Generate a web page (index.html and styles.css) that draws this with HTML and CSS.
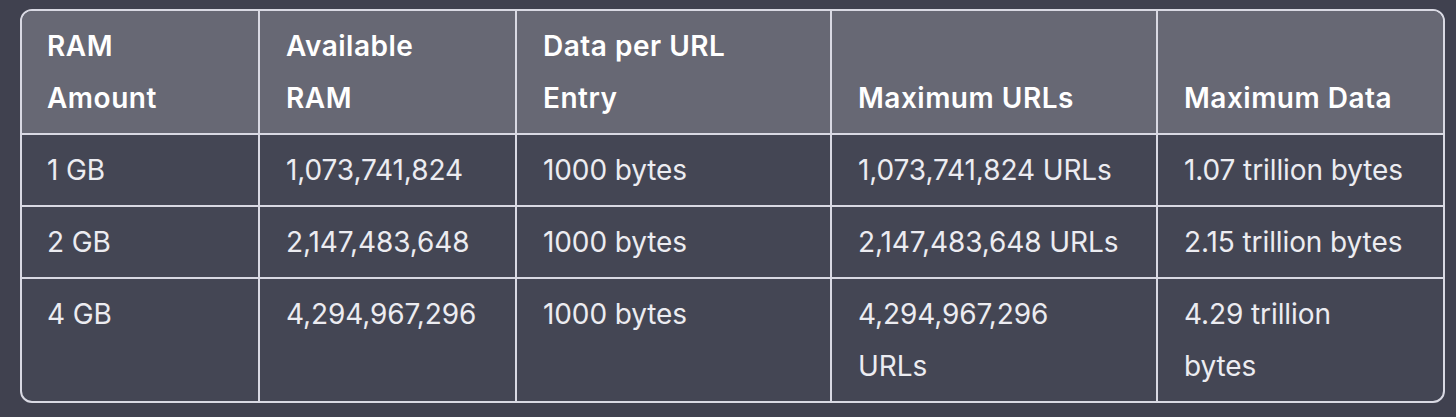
FILE: index.html
```html
<!DOCTYPE html>
<html>
<head>
<meta charset="utf-8">
<link rel="stylesheet" href="styles.css">
</head>
<body>
<div class="page">
  <div class="table-wrap">
    <table class="data">
      <colgroup>
        <col class="c1"><col class="c2"><col class="c3"><col class="c4"><col class="c5">
      </colgroup>
      <thead>
        <tr>
          <th>RAM<br>Amount</th>
          <th>Available<br>RAM</th>
          <th>Data per URL<br>Entry</th>
          <th>Maximum URLs</th>
          <th>Maximum Data</th>
        </tr>
      </thead>
      <tbody>
        <tr>
          <td>1 GB</td>
          <td>1,073,741,824</td>
          <td>1000 bytes</td>
          <td>1,073,741,824 URLs</td>
          <td>1.07 trillion bytes</td>
        </tr>
        <tr>
          <td>2 GB</td>
          <td>2,147,483,648</td>
          <td>1000 bytes</td>
          <td>2,147,483,648 URLs</td>
          <td>2.15 trillion bytes</td>
        </tr>
        <tr>
          <td>4 GB</td>
          <td>4,294,967,296</td>
          <td>1000 bytes</td>
          <td>4,294,967,296<br>URLs</td>
          <td>4.29 trillion<br>bytes</td>
        </tr>
      </tbody>
    </table>
  </div>
</div>
</body>
</html>
```

FILE: styles.css
```css
html, body {
  margin: 0;
  padding: 0;
  background: #40414f;
}

.page {
  padding: 9px 11px 0 20px;
  width: 1425px;
}

.table-wrap {
  border: 2px solid #d9d9e3;
  border-radius: 12px;
  overflow: hidden;
  background: #444654;
}

.data {
  width: 100%;
  border-collapse: separate;
  border-spacing: 0;
  table-layout: fixed;
  font-family: Inter, "Noto Sans", sans-serif;
  font-size: 28px;
  letter-spacing: -0.1px;
  line-height: 52px;
  color: #ececf1;
}

.c1 { width: 236px; }
.c2 { width: 257px; }
.c3 { width: 315px; }
.c4 { width: 326px; }
.c5 { width: auto; }

.data th,
.data td {
  text-align: left;
  padding: 9px 20px 9px 26px;
  border-left: 2px solid #d9d9e3;
  border-top: 2px solid #d9d9e3;
}

.data th:first-child,
.data td:first-child {
  border-left: none;
  padding-left: 25px;
}

.data thead th {
  border-top: none;
  background: #676874;
  font-weight: 600;
  letter-spacing: 0.5px;
  color: #ffffff;
  vertical-align: bottom;
}

.data td {
  font-weight: 400;
  vertical-align: top;
}
```
